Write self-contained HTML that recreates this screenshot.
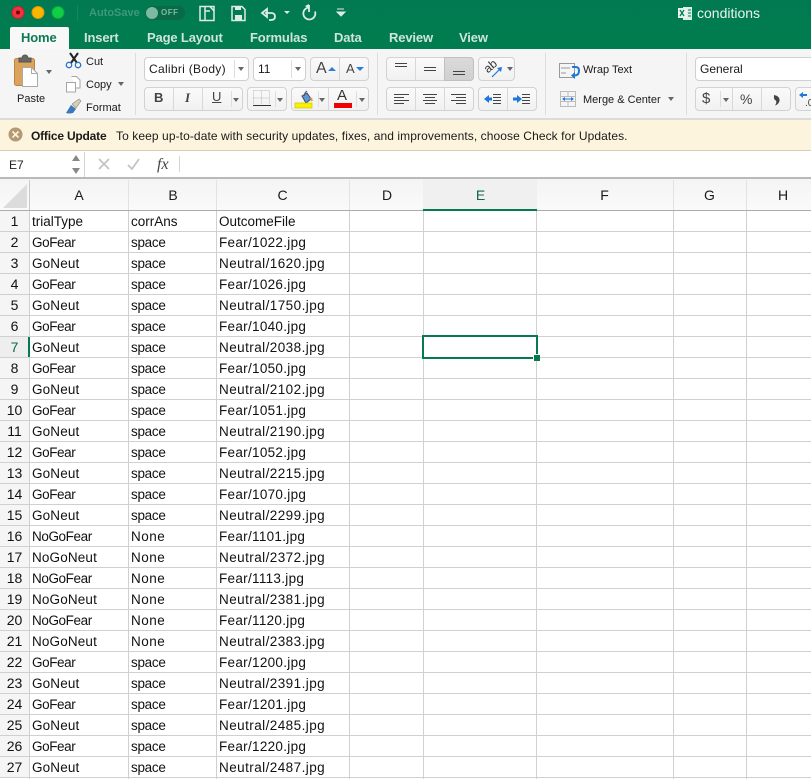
<!DOCTYPE html>
<html><head><meta charset="utf-8">
<style>
*{box-sizing:border-box}
html,body{margin:0;padding:0;width:811px;height:779px;overflow:hidden;background:#fff;font-family:"Liberation Sans",sans-serif;color:#111}
.a{position:absolute;white-space:nowrap}
#top{position:absolute;left:0;top:0;width:811px;height:49px;background:linear-gradient(#017a52,#017c4e)}
.tab{position:absolute;top:30px;font-size:13px;line-height:16px;color:#cfe4da;font-weight:bold;letter-spacing:-.15px}
#rib{position:absolute;left:0;top:49px;width:811px;height:71px;background:#f5f5f5;border-bottom:2px solid #dcdcd6}
.btn{position:absolute;background:linear-gradient(#fafafa,#f1f1f1);border:1px solid #d2d2d2;border-radius:4px}
.inp{position:absolute;background:#fff;border:1px solid #cfcfcf;border-radius:4px}
.sep{position:absolute;width:1px;background:#dedede}
.t{position:absolute;font-size:11px;line-height:14px;white-space:nowrap;color:#1a1a1a}
.tri{position:absolute;width:0;height:0;border-left:3.5px solid transparent;border-right:3.5px solid transparent;border-top:4px solid #666}
#upd{position:absolute;left:0;top:120px;width:811px;height:31px;background:#fdf4dd;border-bottom:1px solid #d8cfb8}
#fx{position:absolute;left:0;top:151px;width:811px;height:26px;background:#fff}
#hdr{position:absolute;left:0;top:177px;width:811px;height:34px;background:linear-gradient(#f4f4f4,#fafafa);border-top:2px solid #b9b9b9;border-bottom:1px solid #acacac}
.ch{position:absolute;top:186px;font-size:14px;line-height:18px;color:#1a1a1a;text-align:center}
.v{position:absolute;top:180px;width:1px;height:30px;background:#e2e2e2}
.gl{position:absolute;top:211px;width:1px;height:568px;background:#d0d0d0}
#grid{position:absolute;left:0;top:211px;width:811px;height:568px}
.r{position:relative;height:21px;border-bottom:1px solid #d0d0d0;font-size:13.5px;line-height:20px;color:#111}
.r span{position:absolute;top:1px;white-space:nowrap}
.r .n{left:0;top:0;width:29px;text-align:center;font-size:14px;line-height:21px;background:#f5f5f5;height:20px}
.r .x{left:32px}.r .y{left:131px;letter-spacing:-.3px}.r .z{left:219px;letter-spacing:.3px}
.r .f{letter-spacing:-.4px}.r .u{letter-spacing:.15px}.r .o{letter-spacing:.5px}.r .m{letter-spacing:.44px}.r .h{letter-spacing:0}
</style></head><body>

<div id="top"></div>
<svg class="a" style="left:0;top:0" width="420" height="49">
<circle cx="18" cy="12.500" r="6" fill="#f2333f" stroke="#c8202c"/><circle cx="18" cy="12.500" r="2" fill="#6b0a10"/>
<circle cx="38" cy="12.500" r="6" fill="#fdb500" stroke="#d79a05"/>
<circle cx="58" cy="12.500" r="6" fill="#0fcf46" stroke="#0ea83d"/>
<line x1="77.500" y1="5" x2="77.500" y2="21" stroke="#0d8a60"/>
<rect x="145" y="6" width="40" height="14" rx="7" fill="#0a6a48"/>
<circle cx="152" cy="13" r="6" fill="#7cbaa3"/>
<path d="M200 6.500h14v14h-14zM205 6.500v14M205 11h5M210 6.500l4 4.500" fill="none" stroke="#dcece4" stroke-width="1.500"/>
<path d="M232 6.500h10l3 3v11h-13z" fill="none" stroke="#dcece4" stroke-width="1.500"/><rect x="235" y="15" width="7" height="5" fill="#dcece4"/><rect x="235" y="7" width="6" height="3" fill="#dcece4"/>
<path d="M262 13l5-4v8zM265 13h6q4 0 4 3.500t-4 3.500h-2" fill="none" stroke="#dcece4" stroke-width="1.800"/>
<path d="M284 11h6l-3 3z" fill="#dcece4"/>
<path d="M309 7.500a6 6 0 1 0 6 4M309 5v7" fill="none" stroke="#dcece4" stroke-width="1.800"/><path d="M305 6l4-2v5z" fill="#dcece4"/>
<path d="M337 9h7M337 12h8l-4 4z" fill="#dcece4" stroke="#dcece4"/>
</svg>
<div class="a" style="left:89px;top:6px;font-size:11px;line-height:14px;font-weight:bold;color:#3d9a78">AutoSave</div>
<div class="a" style="left:161px;top:8px;font-size:8px;line-height:10px;font-weight:bold;color:#7cbaa3;letter-spacing:.5px">OFF</div>
<svg class="a" style="left:677px;top:5px" width="16" height="16"><rect x="6" y="2" width="9" height="13" fill="#dcefe6"/><rect x="1" y="3" width="9" height="10" fill="#e8f3ee"/><path d="M3 5l4 6M7 5l-4 6" stroke="#017a52" stroke-width="1.300"/><path d="M11 5h3M11 8h3M11 11h3" stroke="#017a52"/></svg>
<div class="a" style="left:697px;top:5px;font-size:14px;line-height:17px;color:#eaf4ef">conditions</div>

<div class="a" style="left:10px;top:27px;width:59px;height:22px;background:#f8f8f8;border-radius:2px 2px 0 0"></div>
<div class="tab" style="left:21px;color:#0c7a55">Home</div>
<div class="tab" style="left:84px">Insert</div>
<div class="tab" style="left:147px">Page Layout</div>
<div class="tab" style="left:250px">Formulas</div>
<div class="tab" style="left:334px">Data</div>
<div class="tab" style="left:389px">Review</div>
<div class="tab" style="left:459px">View</div>

<div id="rib"></div>
<svg class="a" style="left:0;top:49px" width="140" height="70">
<rect x="14.500" y="9.500" width="20" height="27" rx="2" fill="#dba35c" stroke="#b98642"/>
<path d="M19 13v-4h3a3 3 0 0 1 6 0h3v4z" fill="#666" stroke="#555"/>
<path d="M22.500 18.500h9l6 6v13h-15z" fill="#fff" stroke="#aaa"/><path d="M31.500 18.500v6h6" fill="none" stroke="#aaa"/>
<path d="M70 4l7 10M78 4l-7 10" stroke="#222" stroke-width="2"/>
<circle cx="69" cy="16" r="2.700" fill="none" stroke="#2a72c8" stroke-width="1.300"/><circle cx="78" cy="16" r="2.700" fill="none" stroke="#2a72c8" stroke-width="1.300"/>
<path d="M71.500 27.500h5l3.500 3.500v8h-4M66.500 33.500h4l.5 0h4.500v9.500h-9z" fill="#fff" stroke="#a5a5a5"/>
<path d="M66 64l5-8 5 4-3 4q-4 1-7 0z" fill="#3a77bd"/><path d="M72 55l7-5 2 2-5 7z" fill="#d9cfae" stroke="#888" stroke-width=".6"/>
</svg>
<div class="tri" style="left:46px;top:70px"></div>
<div class="t" style="left:17px;top:92px">Paste</div>
<div class="t" style="left:86px;top:55px">Cut</div>
<div class="t" style="left:86px;top:78px">Copy</div><div class="tri" style="left:118px;top:82px"></div>
<div class="t" style="left:86px;top:101px">Format</div>
<div class="sep" style="left:135px;top:53px;height:62px"></div>

<!-- font row -->
<div class="inp" style="left:144px;top:57px;width:105px;height:24px"></div>
<div class="t" style="left:149px;top:62px;font-size:12px;letter-spacing:.3px">Calibri (Body)</div>
<div class="sep" style="left:234px;top:60px;height:18px"></div><div class="tri" style="left:238px;top:67px"></div>
<div class="inp" style="left:253px;top:57px;width:53px;height:24px"></div>
<div class="t" style="left:258px;top:62px;font-size:12px">11</div>
<div class="sep" style="left:291px;top:60px;height:18px"></div><div class="tri" style="left:295px;top:67px"></div>
<div class="btn" style="left:310px;top:57px;width:59px;height:24px"></div><div class="sep" style="left:339px;top:58px;height:22px;background:#d8d8d8"></div>
<div class="t" style="left:316px;top:60px;font-size:16px;line-height:18px;color:#444">A</div><div class="a" style="left:328px;top:67px;width:0;height:0;border-left:4px solid transparent;border-right:4px solid transparent;border-bottom:4px solid #2a7fd8"></div>
<div class="t" style="left:346px;top:62px;font-size:13px;color:#444">A</div><div class="a" style="left:356px;top:67px;width:0;height:0;border-left:4px solid transparent;border-right:4px solid transparent;border-top:4px solid #2a7fd8"></div>

<div class="btn" style="left:144px;top:87px;width:99px;height:24px"></div>
<div class="sep" style="left:173px;top:88px;height:22px;background:#d8d8d8"></div><div class="sep" style="left:202px;top:88px;height:22px;background:#d8d8d8"></div><div class="sep" style="left:231px;top:91px;height:16px"></div>
<div class="t" style="left:154px;top:91px;font-size:13px;font-weight:bold;color:#444">B</div>
<div class="a" style="left:185px;top:91px;font-size:13px;line-height:14px;font-style:italic;font-family:'Liberation Serif',serif;font-weight:bold;color:#444">I</div>
<div class="t" style="left:212px;top:90px;font-size:13px;color:#444;text-decoration:underline">U</div>
<div class="tri" style="left:233px;top:98px"></div>
<div class="btn" style="left:247px;top:87px;width:40px;height:24px"></div><div class="sep" style="left:275px;top:91px;height:16px"></div><div class="tri" style="left:277px;top:98px"></div>
<svg class="a" style="left:253px;top:90px" width="18" height="17"><path d="M.5 .5h16M.5 8h16M8.500 .5v14M.500 .5v14M16.500 .5v14" fill="none" stroke="#bbb" stroke-dasharray="1 1"/><path d="M0 15.500h18" stroke="#333"/></svg>
<div class="btn" style="left:291px;top:87px;width:78px;height:24px"></div><div class="sep" style="left:328px;top:88px;height:22px;background:#d8d8d8"></div><div class="sep" style="left:356px;top:91px;height:16px"></div><div class="sep" style="left:318px;top:91px;height:16px"></div>
<svg class="a" style="left:294px;top:89px" width="20" height="20"><path d="M8 7l5-3 4 6-5 4z" fill="#5a9ad8" stroke="#446"/><path d="M13 2q-2 1-3 5" fill="none" stroke="#555"/><path d="M17 9l1 3" stroke="#e0a040" stroke-width="2"/><rect x="1" y="14" width="17" height="5" fill="#f7f000" stroke="#cfc800" stroke-width=".7"/></svg>
<div class="tri" style="left:319px;top:98px"></div>
<div class="t" style="left:337px;top:88px;font-size:15px;line-height:16px;color:#333">A</div><div class="a" style="left:334px;top:103px;width:18px;height:5px;background:#f00000"></div>
<div class="tri" style="left:359px;top:98px"></div>
<div class="sep" style="left:377px;top:53px;height:62px"></div>

<!-- alignment -->
<div class="btn" style="left:386px;top:57px;width:88px;height:24px"></div>
<div class="sep" style="left:415px;top:58px;height:22px;background:#d8d8d8"></div>
<div class="a" style="left:444px;top:57px;width:30px;height:24px;background:linear-gradient(#dadada,#d0d0d0);border:1px solid #c0c0c0;border-radius:0 4px 4px 0"></div>
<div class="btn" style="left:478px;top:57px;width:37px;height:24px"></div>
<div class="btn" style="left:386px;top:87px;width:88px;height:24px"></div>
<div class="sep" style="left:415px;top:88px;height:22px;background:#d8d8d8"></div><div class="sep" style="left:444px;top:88px;height:22px;background:#d8d8d8"></div>
<div class="btn" style="left:478px;top:87px;width:59px;height:24px"></div><div class="sep" style="left:507px;top:88px;height:22px;background:#d8d8d8"></div>
<svg class="a" style="left:380px;top:50px" width="160" height="66" fill="none" stroke="#444">
<path d="M15 13.500h12M15 16.500h12M44 17.500h12M44 20.500h12M73 21.500h12M73 24.500h12"/>
<path d="M14 44.500h15M14 47.500h10M14 50.500h15M14 53.500h10M43 44.500h14M45 47.500h10M43 50.500h14M45 53.500h10M71 44.500h15M76 47.500h10M71 50.500h15M76 53.500h10"/>
<path d="M113 44.500h8M113 47.500h8M113 50.500h8M113 53.500h8M142 44.500h8M142 47.500h8M142 50.500h8M142 53.500h8" stroke="#444"/>
<path d="M104 49l5-4v2.500h3v3h-3v2.500z" fill="#1f78d8" stroke="none"/>
<path d="M133 47.500h4v-2.500l5 4-5 4v-2.500h-4z" fill="#1f78d8" stroke="none"/>
<path d="M112 27l8-8" stroke="#1f78d8" stroke-width="1.200"/><path d="M122 17l-1 5-4-4z" fill="#1f78d8" stroke="none"/>
</svg>
<div class="a" style="left:484px;top:60px;font-size:12px;line-height:13px;color:#333;transform:rotate(-40deg)">ab</div>
<div class="tri" style="left:507px;top:67px"></div>
<div class="sep" style="left:545px;top:53px;height:62px"></div>

<!-- wrap -->
<svg class="a" style="left:558px;top:60px" width="24" height="50" fill="none">
<path d="M1.500 3.500h15v14h-15zM3 8h9M3 13h5" stroke="#999"/><path d="M14 7h4q3 0 3 4t-4 4.500" stroke="#1f78d8" stroke-width="2"/><path d="M17 12v7l-4-3.500z" fill="#1f78d8"/>
<path d="M2.500 31.500h15v15h-15zM2.500 36.500h15M2.500 41.500h15M10 31.500v5M10 41.500v5" stroke="#bbb"/><path d="M5 39h10" stroke="#1f78d8"/><path d="M4 39l3-2v4zM16 39l-3-2v4z" fill="#1f78d8"/>
</svg>
<div class="t" style="left:583px;top:63px">Wrap Text</div>
<div class="t" style="left:583px;top:93px">Merge &amp; Center</div><div class="tri" style="left:668px;top:97px"></div>
<div class="sep" style="left:686px;top:53px;height:62px"></div>

<!-- number -->
<div class="a" style="left:695px;top:57px;width:130px;height:24px;background:#fff;border:1px solid #cfcfcf;border-radius:4px"></div>
<div class="t" style="left:700px;top:62px;font-size:12px">General</div>
<div class="btn" style="left:695px;top:87px;width:96px;height:24px"></div>
<div class="sep" style="left:720px;top:91px;height:16px"></div><div class="sep" style="left:732px;top:88px;height:22px;background:#d8d8d8"></div><div class="sep" style="left:761px;top:88px;height:22px;background:#d8d8d8"></div>
<div class="t" style="left:702px;top:90px;font-size:15px;line-height:18px;color:#444">$</div><div class="tri" style="left:723px;top:98px"></div>
<div class="t" style="left:740px;top:91px;font-size:14px;line-height:16px;color:#444">%</div>
<svg class="a" style="left:770px;top:92px" width="14" height="16"><path d="M4 3q6 1 5.500 6q-1 3.500-4.500 4.500q2-3 1-5q-2.500 0-2-5.500z" fill="#444"/></svg>
<div class="btn" style="left:795px;top:87px;width:40px;height:24px"></div>
<svg class="a" style="left:798px;top:91px" width="13" height="12"><path d="M1 4l4-3v2h4v2H5v2z" fill="#1f78d8"/></svg>
<div class="t" style="left:805px;top:99px;font-size:10px;line-height:10px;color:#444">.0</div>

<!-- update bar -->
<div id="upd"></div>
<svg class="a" style="left:8px;top:127px" width="15" height="15"><circle cx="7.500" cy="7.500" r="7" fill="#b39a75"/><path d="M4.500 4.500l6 6M10.500 4.500l-6 6" stroke="#fdf4dd" stroke-width="1.600"/></svg>
<div class="a" style="left:31px;top:129px;font-size:12px;line-height:15px;font-weight:bold;color:#1a1a1a;letter-spacing:-.2px">Office Update</div>
<div class="a" style="left:116px;top:129px;font-size:12px;line-height:15px;color:#1a1a1a;letter-spacing:.087px">To keep up-to-date with security updates, fixes, and improvements, choose Check for Updates.</div>

<!-- formula bar -->
<div id="fx"></div>
<div class="a" style="left:9px;top:158px;font-size:12px;line-height:15px;color:#222">E7</div>
<div class="a" style="left:72px;top:155px;border-left:4px solid transparent;border-right:4px solid transparent;border-bottom:6px solid #888"></div>
<div class="a" style="left:72px;top:168px;border-left:4px solid transparent;border-right:4px solid transparent;border-top:6px solid #888"></div>
<div class="a" style="left:84px;top:152px;width:1px;height:25px;background:#d5d5d5"></div>
<svg class="a" style="left:95px;top:157px" width="50" height="15" fill="none" stroke="#c4c4c4" stroke-width="1.800"><path d="M4 2l10 10M14 2L4 12"/><path d="M33 8l4 4 7-10"/></svg>
<div class="a" style="left:157px;top:156px;font-size:16px;line-height:18px;font-style:italic;font-family:'Liberation Serif',serif;color:#444">fx</div>
<div class="a" style="left:179px;top:156px;width:1px;height:16px;background:#d5d5d5"></div>

<!-- column headers -->
<div id="hdr"></div>
<svg class="a" style="left:0;top:179px" width="29" height="31"><path d="M3 29L27 5v24z" fill="#dcdcdc"/></svg>
<div class="a" style="left:423px;top:179px;width:114px;height:32px;background:#f0f0f0;border-bottom:2px solid #047a4e"></div>
<div class="v" style="left:29px;background:#c8c8c8"></div><div class="v" style="left:128px"></div><div class="v" style="left:216px"></div><div class="v" style="left:349px"></div><div class="v" style="left:673px"></div><div class="v" style="left:746px"></div>
<div class="ch" style="left:29px;width:100px">A</div>
<div class="ch" style="left:129px;width:88px">B</div>
<div class="ch" style="left:216px;width:133px">C</div>
<div class="ch" style="left:350px;width:74px">D</div>
<div class="ch" style="left:424px;width:113px;color:#0b6b48">E</div>
<div class="ch" style="left:536px;width:137px">F</div>
<div class="ch" style="left:673px;width:73px">G</div>
<div class="ch" style="left:746px;width:74px">H</div>

<!-- grid -->
<div id="grid">
<div class="r"><span class="n">1</span><span class="x h">trialType</span><span class="y h">corrAns</span><span class="z h">OutcomeFile</span></div>
<div class="r"><span class="n">2</span><span class="x f">GoFear</span><span class="y">space</span><span class="z">Fear/1022.jpg</span></div>
<div class="r"><span class="n">3</span><span class="x u">GoNeut</span><span class="y">space</span><span class="z m">Neutral/1620.jpg</span></div>
<div class="r"><span class="n">4</span><span class="x f">GoFear</span><span class="y">space</span><span class="z">Fear/1026.jpg</span></div>
<div class="r"><span class="n">5</span><span class="x u">GoNeut</span><span class="y">space</span><span class="z m">Neutral/1750.jpg</span></div>
<div class="r"><span class="n">6</span><span class="x f">GoFear</span><span class="y">space</span><span class="z">Fear/1040.jpg</span></div>
<div class="r"><span class="n" style="background:#eee;color:#0b6b48">7</span><span class="x u">GoNeut</span><span class="y">space</span><span class="z m">Neutral/2038.jpg</span></div>
<div class="r"><span class="n">8</span><span class="x f">GoFear</span><span class="y">space</span><span class="z">Fear/1050.jpg</span></div>
<div class="r"><span class="n">9</span><span class="x u">GoNeut</span><span class="y">space</span><span class="z m">Neutral/2102.jpg</span></div>
<div class="r"><span class="n">10</span><span class="x f">GoFear</span><span class="y">space</span><span class="z">Fear/1051.jpg</span></div>
<div class="r"><span class="n">11</span><span class="x u">GoNeut</span><span class="y">space</span><span class="z m">Neutral/2190.jpg</span></div>
<div class="r"><span class="n">12</span><span class="x f">GoFear</span><span class="y">space</span><span class="z">Fear/1052.jpg</span></div>
<div class="r"><span class="n">13</span><span class="x u">GoNeut</span><span class="y">space</span><span class="z m">Neutral/2215.jpg</span></div>
<div class="r"><span class="n">14</span><span class="x f">GoFear</span><span class="y">space</span><span class="z">Fear/1070.jpg</span></div>
<div class="r"><span class="n">15</span><span class="x u">GoNeut</span><span class="y">space</span><span class="z m">Neutral/2299.jpg</span></div>
<div class="r"><span class="n">16</span><span class="x f">NoGoFear</span><span class="y o">None</span><span class="z">Fear/1101.jpg</span></div>
<div class="r"><span class="n">17</span><span class="x u">NoGoNeut</span><span class="y o">None</span><span class="z m">Neutral/2372.jpg</span></div>
<div class="r"><span class="n">18</span><span class="x f">NoGoFear</span><span class="y o">None</span><span class="z">Fear/1113.jpg</span></div>
<div class="r"><span class="n">19</span><span class="x u">NoGoNeut</span><span class="y o">None</span><span class="z m">Neutral/2381.jpg</span></div>
<div class="r"><span class="n">20</span><span class="x f">NoGoFear</span><span class="y o">None</span><span class="z">Fear/1120.jpg</span></div>
<div class="r"><span class="n">21</span><span class="x u">NoGoNeut</span><span class="y o">None</span><span class="z m">Neutral/2383.jpg</span></div>
<div class="r"><span class="n">22</span><span class="x f">GoFear</span><span class="y">space</span><span class="z">Fear/1200.jpg</span></div>
<div class="r"><span class="n">23</span><span class="x u">GoNeut</span><span class="y">space</span><span class="z m">Neutral/2391.jpg</span></div>
<div class="r"><span class="n">24</span><span class="x f">GoFear</span><span class="y">space</span><span class="z">Fear/1201.jpg</span></div>
<div class="r"><span class="n">25</span><span class="x u">GoNeut</span><span class="y">space</span><span class="z m">Neutral/2485.jpg</span></div>
<div class="r"><span class="n">26</span><span class="x f">GoFear</span><span class="y">space</span><span class="z">Fear/1220.jpg</span></div>
<div class="r"><span class="n">27</span><span class="x u">GoNeut</span><span class="y">space</span><span class="z m">Neutral/2487.jpg</span></div>
</div>
<div class="gl" style="left:29px"></div><div class="gl" style="left:128px"></div><div class="gl" style="left:216px"></div><div class="gl" style="left:349px"></div><div class="gl" style="left:423px"></div><div class="gl" style="left:536px"></div><div class="gl" style="left:673px"></div><div class="gl" style="left:746px"></div>
<div class="a" style="left:28px;top:337px;width:2px;height:20px;background:#047a4e"></div>

<!-- selection -->
<div class="a" style="left:422px;top:335px;width:116px;height:24px;border:2px solid #047a4e"></div>
<div class="a" style="left:533px;top:354px;box-sizing:content-box;width:6px;height:6px;background:#047a4e;border-left:1px solid #fff;border-top:1px solid #fff"></div>
</body></html>
